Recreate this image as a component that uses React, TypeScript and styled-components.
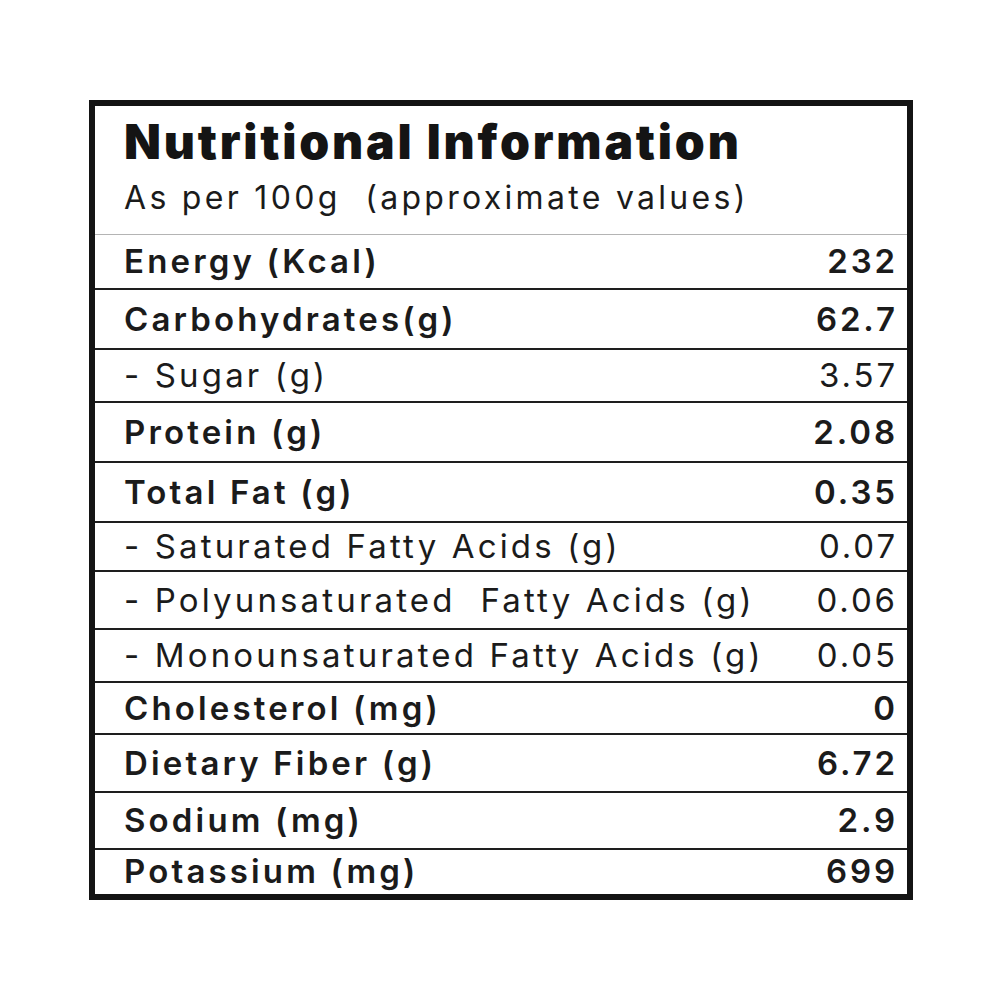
import React from "react";
import styled, { createGlobalStyle } from "styled-components";

const GlobalStyle = createGlobalStyle`
  html, body { margin: 0; padding: 0; background: #ffffff; }
  * { box-sizing: border-box; }
`;

const Page = styled.div`
  width: 1000px;
  height: 1000px;
  padding: 100px 0 0 89px;
  background: #ffffff;
  font-family: Inter, "Noto Sans", sans-serif;
  color: #1b1b1b;
`;

const Card = styled.div`
  width: 824px;
  height: 800px;
  border: 6px solid #141414;
  display: flex;
  flex-direction: column;
`;

const Header = styled.div`
  height: 129px;
  padding: 12px 0 0 29px;
  border-bottom: 1px solid #b4b4b4;
  display: flex;
  flex-direction: column;
  gap: 16px;
`;

const Title = styled.h1`
  margin: 0;
  font-size: 48px;
  line-height: 1;
  font-weight: 900;
  letter-spacing: 2.8px;
  color: #141414;
`;

const Subtitle = styled.div`
  font-size: 32px;
  line-height: 1;
  font-weight: 400;
  letter-spacing: 3.3px;
  white-space: pre;
`;

const Row = styled.div<{ $h: number; $last?: boolean }>`
  height: ${(p) => p.$h}px;
  flex: none;
  display: flex;
  align-items: center;
  justify-content: space-between;
  padding: 0 9px 0 29px;
  border-bottom: ${(p) => (p.$last ? "none" : "2px solid #1e1e1e")};
`;

const Label = styled.span<{ $bold?: boolean }>`
  font-size: 33px;
  line-height: 1;
  letter-spacing: 3.15px;
  font-weight: ${(p) => (p.$bold ? 600 : 400)};
  white-space: pre;
`;

const Value = styled.span<{ $bold?: boolean }>`
  font-size: 33px;
  line-height: 1;
  letter-spacing: 2.9px;
  font-weight: ${(p) => (p.$bold ? 600 : 400)};
`;

const rows = [
  { label: "Energy (Kcal)", value: "232", bold: true, h: 55 },
  { label: "Carbohydrates(g)", value: "62.7", bold: true, h: 60 },
  { label: "- Sugar (g)", value: "3.57", bold: false, h: 53 },
  { label: "Protein (g)", value: "2.08", bold: true, h: 60 },
  { label: "Total Fat (g)", value: "0.35", bold: true, h: 60 },
  { label: "- Saturated Fatty Acids (g)", value: "0.07", bold: false, h: 49 },
  { label: "- Polyunsaturated  Fatty Acids (g)", value: "0.06", bold: false, h: 58 },
  { label: "- Monounsaturated Fatty Acids (g)", value: "0.05", bold: false, h: 53 },
  { label: "Cholesterol (mg)", value: "0", bold: true, h: 52 },
  { label: "Dietary Fiber (g)", value: "6.72", bold: true, h: 58 },
  { label: "Sodium (mg)", value: "2.9", bold: true, h: 57 },
  { label: "Potassium (mg)", value: "699", bold: true, h: 43 },
];

export default function App() {
  return (
    <>
      <GlobalStyle />
      <Page>
        <Card>
          <Header>
            <Title>Nutritional Information</Title>
            <Subtitle>{"As per 100g  (approximate values)"}</Subtitle>
          </Header>
          {rows.map((r, i) => (
            <Row key={r.label} $h={r.h} $last={i === rows.length - 1}>
              <Label $bold={r.bold}>{r.label}</Label>
              <Value $bold={r.bold}>{r.value}</Value>
            </Row>
          ))}
        </Card>
      </Page>
    </>
  );
}
